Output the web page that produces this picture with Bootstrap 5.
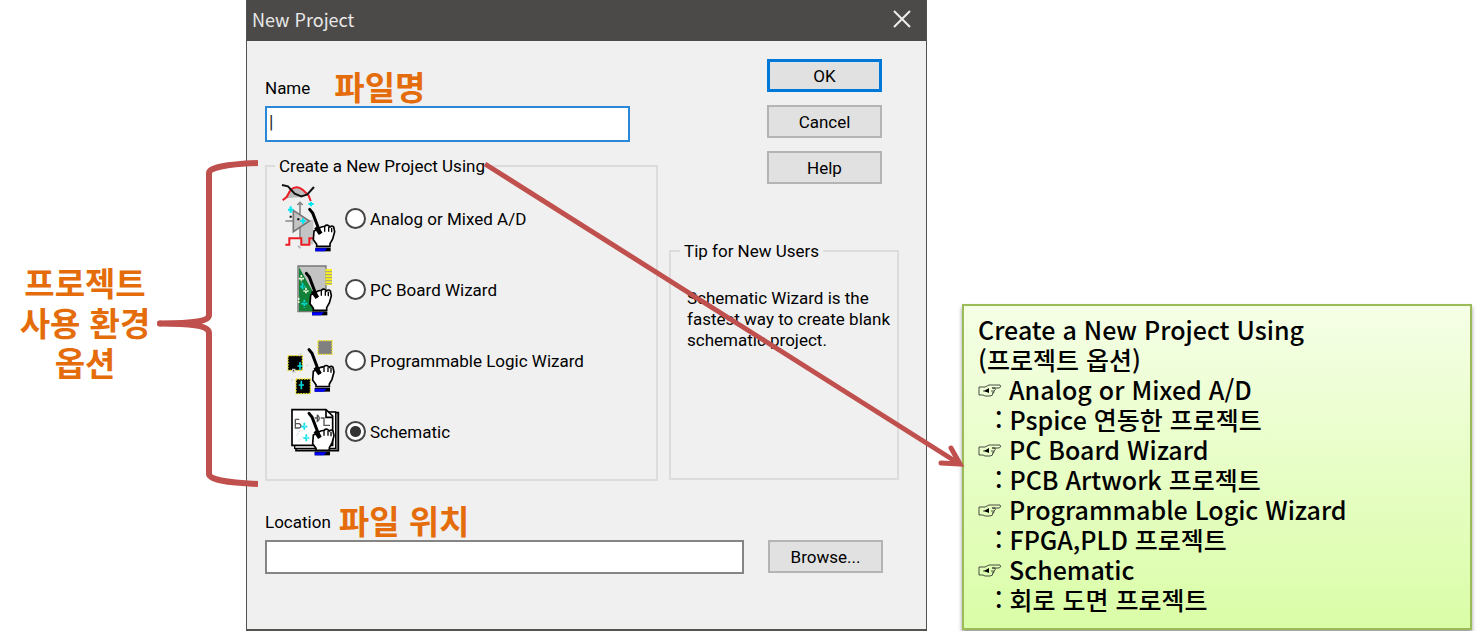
<!DOCTYPE html>
<html lang="ko">
<head>
<meta charset="utf-8">
<meta name="viewport" content="width=device-width, initial-scale=1">
<title>New Project</title>
<link href="https://cdn.jsdelivr.net/npm/bootstrap@5.3.0/dist/css/bootstrap.min.css" rel="stylesheet">
<style>
  body { background: #fff; color: #000; font-family: Roboto, "Noto Sans CJK KR", sans-serif; font-size: 17px; line-height: 20px; }
  .stage { display: grid; grid-template-columns: 246fr 681fr 552fr; align-items: start; }
  .note-ko { color: #e46c0a; font-family: "Noto Sans CJK KR", sans-serif; font-weight: 700; font-size: 33px; line-height: 40px; }
  .side { padding-top: 160px; padding-left: 14px; z-index: 2; }
  .side-text { flex: 1 1 0; text-align: center; white-space: nowrap; padding-bottom: 4px; }
  .brace { flex: none; width: 102px; height: 328px; margin-right: -12px; }
  .dialog { background: #f0f0f0; border: 1px solid #55534f; border-top-width: 0; border-bottom-width: 2px; }
  .titlebar { background: #4c4a48; color: #e8e8e8; height: 41px; padding: 0 15px 3px 5px; font-family: "Noto Sans CJK KR", sans-serif; font-size: 18px; }
  .close-x { border: 0; background: none; padding: 0; display: flex; }
  .dialog-body { padding: 18px 27px 55px 18px; }
  .upper { display: grid; grid-template-columns: minmax(0, 393fr) minmax(0, 230fr); gap: 11px; }
  .field-head { height: 47px; }
  .box { border: 1px solid #7a7a7a; border-radius: 0; background: #fff; padding: 0 4px; }
  .box-name { border: 2px solid #2b88d8; height: 36px; width: 93%; padding: 0 2px 6px; font-size: 18px; }
  .box-loc { border: 2px solid #858585; height: 34px; }
  .box:focus { box-shadow: none; }
  .group { border: 2px solid #dcdcdc; }
  .group legend { float: none; width: auto; margin: 0; padding: 0 4px; font-size: 17px; line-height: 20px; }
  .group-main { margin-top: 14px; padding: 7px 0 12px 8px; }
  .choice { display: flex; align-items: center; gap: 4px; padding-left: 6px; }
  .choice svg { width: 60px; height: 71px; flex: none; }
  .choice .form-check-input { width: 21px; height: 21px; margin: 0; border: 2px solid #444; background: #fff; flex: none; }
  .choice .form-check-input:checked { background: radial-gradient(circle, #333 0 5px, #fff 6px); }
  .win-btn { width: 115px; height: 33px; border: 2px solid #b4b4b4; border-radius: 0; background: #e1e1e1; color: #000; font-size: 17px; line-height: 20px; padding: 0; }
  .win-btn-main { border: 3px solid #0078d7; }
  .buttons { padding-right: 17px; gap: 13px; }
  .group-tip { margin-top: 57px; height: 239px; padding: 27px 0 0 9px; }
  .group-tip p { line-height: 21px; padding-left: 7px; }
  .location-head { margin-top: 12px; }
  .guide { margin: 304px 7px 0 35px; border: 2px solid #9bbb59; background: linear-gradient(#f5ffe6, #dafda7); box-shadow: 0 3px 4px rgba(0,0,0,.4); padding: 8px 14px 14px; font-family: "Noto Sans CJK KR", sans-serif; font-weight: 500; font-size: 25px; line-height: 30px; }
  .guide dt { font-weight: 500; display: flex; }
  .guide dd { padding-left: 17px; }
  .hand-mark { width: 24px; height: 14px; margin: 10px 7px 0 0; flex: none; }
  .arrow { position: absolute; inset: 0; width: 100%; height: 100%; pointer-events: none; z-index: 3; }
</style>
</head>
<body>
<svg class="d-none" aria-hidden="true">
  <symbol id="wand" viewBox="0 0 90 130" overflow="visible">
    <path d="M14 66 L12 92 L22 106 V112 H62 V104 L70 90 L76 68 L73 54 Q68 48 62 54 Q54 44 46 52 L36 54 Z" fill="#fff" stroke="#000" stroke-width="5"/>
    <path d="M46 54V68M58 54V68M67 56V70" stroke="#000" stroke-width="4" fill="none"/>
    <path d="M1 1L10 12L32 70" fill="none" stroke="#000" stroke-width="9" stroke-linecap="round"/>
    <path d="M20 54L34 74" stroke="#000" stroke-width="13"/>
    <path d="M18 116H64V127H18Z" fill="#000"/><path d="M18 118H54L45 127H18Z" fill="#00f"/>
  </symbol>
  <symbol id="point" viewBox="0 0 24 14">
    <path d="M1 3H7L11 1H22Q24 3 21 4H14M14 4H17Q18 6 16 7H13M16 7Q17 9 14 9M15 9Q15 12 12 12H7L5 11H1V3M5 7H10" fill="none" stroke="#222" stroke-width=".8"/>
    <path d="M6 7L11 4V9Z"/>
  </symbol>
</svg>

<main class="stage position-relative">
  <aside class="side d-flex align-items-center">
    <div class="side-text note-ko">프로젝트<br>사용 환경<br>옵션</div>
    <svg class="brace" viewBox="156 160 102 328" aria-hidden="true">
      <path d="M258 163Q209 165 209 173V315C209 321 195 323.500 160 323.500C195 323.500 209 326 209 333V474Q209 482 258 484" fill="none" stroke="#c0504d" stroke-width="6" stroke-linejoin="round"/>
      <circle cx="160" cy="323.500" r="3" fill="#c0504d"/>
    </svg>
  </aside>

  <form class="dialog">
    <header class="titlebar d-flex align-items-center justify-content-between">
      <span>New Project</span>
      <button type="button" class="close-x" aria-label="Close"><svg width="18" height="18" viewBox="0 0 18 18"><path d="M1 1L17 17M17 1L1 17" stroke="#eee" stroke-width="2"/></svg></button>
    </header>
    <div class="dialog-body">
      <div class="upper">
        <div>
          <div class="field-head d-flex align-items-end gap-4">
            <label for="name" class="pb-2">Name</label><span class="note-ko">파일명</span>
          </div>
          <input id="name" class="form-control box box-name" type="text" value="|">
          <fieldset class="group group-main">
            <legend>Create a New Project Using</legend>
            <label class="choice">
              <svg viewBox="33 24 180 213" aria-hidden="true">
                <path d="M50 70L65 42Q80 30 96 40L108 58L92 66Z" fill="#bbb"/>
                <path d="M38 76L50 66L62 44Q80 30 98 44L116 62L122 78" fill="none" stroke="#ed1c24" stroke-width="6"/>
                <path d="M36 30L54 34L74 56L94 64L112 58L132 36" fill="none" stroke="#111" stroke-width="6"/>
                <path d="M90 135H130V208H90Z" fill="#c4c4c4"/>
                <path d="M90 84V190M82 90L90 82L98 90M46 138H70" fill="none" stroke="#888" stroke-width="5"/>
                <path d="M70 106L118 138L70 170Z" fill="#c4c4c4" stroke="#777" stroke-width="5"/>
                <path d="M46 209H58V190H94V209H118V190H132" fill="none" stroke="#ed1c24" stroke-width="6"/>
                <path d="M62 94V114M54 104H70M123 80V94M115 87H131M99 130V146M91 138H107" stroke="#00e8f0" stroke-width="6"/>
                <path d="M59 122H65V128H59ZM82 130H88V136H82Z"/><path d="M84 212L92 220" stroke="#aaa" stroke-width="4"/>
                <use href="#wand" x="118" y="102" width="90" height="130"/>
              </svg>
              <input class="form-check-input" type="radio" name="kind"><span>Analog or Mixed A/D</span>
            </label>
            <label class="choice">
              <svg viewBox="33 -3 180 213" aria-hidden="true">
                <path d="M84 33H168V170H84Z" fill="#c3c3c3" stroke="#777" stroke-width="4"/>
                <path d="M87 36L134 120V168H87Z" fill="#118238"/>
                <path d="M166 42H186V90H166Z" fill="#f7ef20"/><path d="M166 50H186M166 59H186M166 68H186M166 77H186M166 86H186" stroke="#999" stroke-width="3"/>
                <path d="M94 60V82M86 71H102M108 98V118M100 108H116M86 128V144" stroke="#e9f5d8" stroke-width="5" stroke-dasharray="7 3"/>
                <path d="M98 84V106M91 95H106M103 134V158M94 146H112" stroke="#00d8d8" stroke-width="5" stroke-dasharray="8 3"/>
                <use href="#wand" x="108" y="54" width="90" height="130"/>
              </svg>
              <input class="form-check-input" type="radio" name="kind"><span>PC Board Wizard</span>
            </label>
            <label class="choice">
              <svg viewBox="33 -15 180 213" aria-hidden="true">
                <path d="M144 32H186V73H144Z" fill="#808080"/><path d="M54 77H97V121H54ZM78 147H121V191H78Z"/>
                <path d="M144 32H186V73H144ZM54 77H97V121H54ZM78 147H121V191H78Z" fill="none" stroke="#eee22a" stroke-width="4" stroke-dasharray="5 3"/>
                <path d="M90 96V120M82 108H98M94 152V178M86 165H102" stroke="#00d8d8" stroke-width="5"/>
                <path d="M88 78L94 70M68 118H74V126H68ZM110 106H114M64 150H68" stroke="#ccc" stroke-width="4"/>
                <use href="#wand" x="116" y="58" width="90" height="130"/>
              </svg>
              <input class="form-check-input" type="radio" name="kind"><span>Programmable Logic Wizard</span>
            </label>
            <label class="choice">
              <svg viewBox="33 -12 180 213" aria-hidden="true">
                <path d="M78 38H205V152H78Z" fill="#999" stroke="#000" stroke-width="5"/><path d="M74 36H197V145H74Z" fill="#fff" stroke="#000" stroke-width="4"/>
                <path d="M66 29H168L188 48V136H66Z" fill="#fff" stroke="#000" stroke-width="5"/><path d="M168 29V52H188" fill="none" stroke="#000" stroke-width="5"/>
                <path d="M76 58H88M76 58V84H88Q98 78 88 71H78M134 54H142M142 44V64Q154 56 142 44M152 54H162V76H180" fill="none" stroke="#555" stroke-width="4"/>
                <path d="M103 68V92M94 80H112M109 103V124M100 114H118" stroke="#00e0e8" stroke-width="5" stroke-dasharray="9 3"/>
                <path d="M90 92L80 108M98 110L84 126" stroke="#ddd" stroke-width="4" stroke-dasharray="4 4"/>
                <use href="#wand" x="116" y="39" width="90" height="130"/>
              </svg>
              <input class="form-check-input" type="radio" name="kind" checked><span>Schematic</span>
            </label>
          </fieldset>
        </div>
        <div>
          <div class="buttons d-flex flex-column align-items-end">
            <button type="button" class="btn win-btn win-btn-main">OK</button>
            <button type="button" class="btn win-btn">Cancel</button>
            <button type="button" class="btn win-btn">Help</button>
          </div>
          <fieldset class="group group-tip">
            <legend>Tip for New Users</legend>
            <p class="mb-0 text-nowrap">Schematic Wizard is the<br>fastest way to create blank<br>schematic project.</p>
          </fieldset>
        </div>
      </div>
      <div class="field-head location-head d-flex align-items-end gap-2">
        <label for="loc" class="pb-2">Location</label><span class="note-ko">파일 위치</span>
      </div>
      <div class="d-flex gap-4 pe-3">
        <input id="loc" class="form-control box box-loc" type="text">
        <button type="button" class="btn win-btn flex-shrink-0">Browse...</button>
      </div>
    </div>
  </form>

  <section class="guide">
    <div>Create a New Project Using</div>
    <div>(프로젝트 옵션)</div>
    <dl class="mb-0">
      <dt><svg class="hand-mark" aria-hidden="true"><use href="#point"/></svg>Analog or Mixed A/D</dt>
      <dd class="mb-0">: Pspice 연동한 프로젝트</dd>
      <dt><svg class="hand-mark" aria-hidden="true"><use href="#point"/></svg>PC Board Wizard</dt>
      <dd class="mb-0">: PCB Artwork 프로젝트</dd>
      <dt><svg class="hand-mark" aria-hidden="true"><use href="#point"/></svg>Programmable Logic Wizard</dt>
      <dd class="mb-0">: FPGA,PLD 프로젝트</dd>
      <dt><svg class="hand-mark" aria-hidden="true"><use href="#point"/></svg>Schematic</dt>
      <dd class="mb-0">: 회로 도면 프로젝트</dd>
    </dl>
  </section>

  <svg class="arrow" viewBox="0 0 1479 631" preserveAspectRatio="none" aria-hidden="true">
    <path d="M485 164L958 463" stroke="#c0504d" stroke-width="5"/>
    <path d="M951 448L960 464L941 463" fill="none" stroke="#c0504d" stroke-width="5" stroke-linecap="round"/>
  </svg>
</main>
<script src="https://cdn.jsdelivr.net/npm/bootstrap@5.3.0/dist/js/bootstrap.bundle.min.js"></script>
</body>
</html>
